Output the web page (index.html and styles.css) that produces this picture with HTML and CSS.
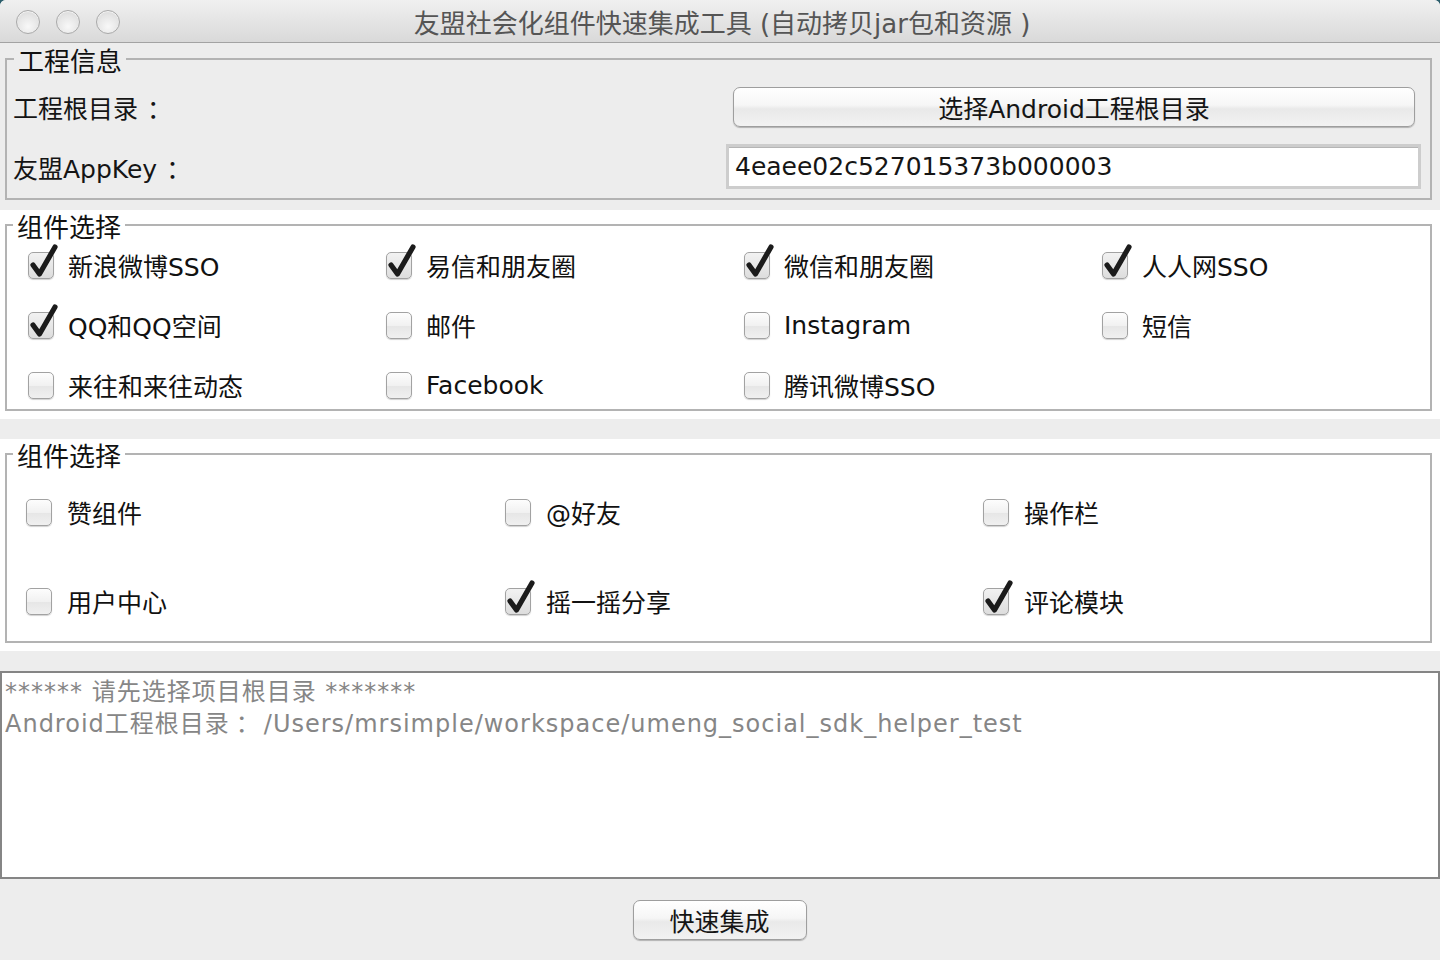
FILE: index.html
```html
<!DOCTYPE html>
<html lang="zh-CN">
<head>
<meta charset="utf-8">
<title>友盟社会化组件快速集成工具</title>
<link rel="stylesheet" href="styles.css">
</head>
<body>
<div class="window">
  <header class="titlebar">
    <div class="lights">
      <span class="light"></span><span class="light"></span><span class="light"></span>
    </div>
    <div class="title">友盟社会化组件快速集成工具 (自动拷贝jar包和资源 )</div>
  </header>

  <section class="sec sec-gray">
    <fieldset class="group info">
      <legend>工程信息</legend>
      <div class="info-grid">
        <div class="info-label">工程根目录<span class="punct">：</span></div>
        <div class="info-ctl"><button class="btn btn-wide">选择Android工程根目录</button></div>
        <div class="info-label">友盟AppKey<span class="punct">：</span></div>
        <div class="info-ctl"><input class="field" type="text" value="4eaee02c527015373b000003"></div>
      </div>
    </fieldset>
  </section>

  <section class="sec sec-white sec-platforms">
    <fieldset class="group platforms">
      <legend>组件选择</legend>
      <div class="grid4">
        <label class="cb"><span class="box on"><svg viewBox="0 0 30 36"><path d="M5 21 L11.5 30 L27 3"/></svg></span><span>新浪微博SSO</span></label>
        <label class="cb"><span class="box on"><svg viewBox="0 0 30 36"><path d="M5 21 L11.5 30 L27 3"/></svg></span><span>易信和朋友圈</span></label>
        <label class="cb"><span class="box on"><svg viewBox="0 0 30 36"><path d="M5 21 L11.5 30 L27 3"/></svg></span><span>微信和朋友圈</span></label>
        <label class="cb"><span class="box on"><svg viewBox="0 0 30 36"><path d="M5 21 L11.5 30 L27 3"/></svg></span><span>人人网SSO</span></label>
        <label class="cb"><span class="box on"><svg viewBox="0 0 30 36"><path d="M5 21 L11.5 30 L27 3"/></svg></span><span>QQ和QQ空间</span></label>
        <label class="cb"><span class="box"></span><span>邮件</span></label>
        <label class="cb"><span class="box"></span><span>Instagram</span></label>
        <label class="cb"><span class="box"></span><span>短信</span></label>
        <label class="cb"><span class="box"></span><span>来往和来往动态</span></label>
        <label class="cb"><span class="box"></span><span>Facebook</span></label>
        <label class="cb"><span class="box"></span><span>腾讯微博SSO</span></label>
      </div>
    </fieldset>
  </section>

  <section class="sec sec-white sec-features">
    <fieldset class="group features">
      <legend>组件选择</legend>
      <div class="grid3">
        <label class="cb"><span class="box"></span><span>赞组件</span></label>
        <label class="cb"><span class="box"></span><span>@好友</span></label>
        <label class="cb"><span class="box"></span><span>操作栏</span></label>
        <label class="cb"><span class="box"></span><span>用户中心</span></label>
        <label class="cb"><span class="box on"><svg viewBox="0 0 30 36"><path d="M5 21 L11.5 30 L27 3"/></svg></span><span>摇一摇分享</span></label>
        <label class="cb"><span class="box on"><svg viewBox="0 0 30 36"><path d="M5 21 L11.5 30 L27 3"/></svg></span><span>评论模块</span></label>
      </div>
    </fieldset>
  </section>

  <div class="log">
    <div class="log-line">****** 请先选择项目根目录 *******</div>
    <div class="log-line">Android工程根目录<span class="punct">：</span>/Users/mrsimple/workspace/umeng_social_sdk_helper_test</div>
  </div>

  <footer class="footer">
    <button class="btn btn-go">快速集成</button>
  </footer>
</div>
</body>
</html>
```

FILE: styles.css
```css
* { box-sizing: border-box; }

html, body {
  margin: 0;
  padding: 0;
  background: #2c5e6c;
}

body {
  font-family: "DejaVu Sans", "Noto Sans CJK SC", sans-serif;
  color: #151515;
}

.punct {
  display: inline-block;
  margin-left: 9px;
}

.window {
  width: 1440px;
  height: 960px;
  background: #ededed;
  border-radius: 6px 6px 0 0;
  overflow: hidden;
  display: flex;
  flex-direction: column;
}

/* title bar */
.titlebar {
  height: 43px;
  flex: none;
  display: flex;
  align-items: center;
  background: linear-gradient(#f0f0f0, #d9d9d9);
  border-bottom: 1px solid #a3a3a3;
}

.lights {
  display: flex;
  gap: 16px;
  padding-left: 16px;
  margin-top: 1px;
}

.light {
  width: 24px;
  height: 24px;
  border-radius: 50%;
  border: 1px solid #a9a9a9;
  background: radial-gradient(circle at 50% 70%, #f8f8f8 0%, #e4e4e4 60%, #d2d2d2 100%);
  box-shadow: inset 0 1px 1px rgba(255,255,255,0.8);
}

.title {
  flex: 1;
  text-align: center;
  font-size: 26px;
  color: #555;
  margin-left: -116px;
  margin-top: 1px;
}

/* sections */
.sec { flex: none; padding: 0 8px 0 5px; }
.sec-gray { background: #ededed; padding-bottom: 10px; }
.sec-white { background: #fff; }
.sec-platforms { padding-bottom: 8px; }
.sec-features { margin-top: 20px; padding-bottom: 8px; }

.group {
  margin: 0;
  border: 2px solid #b3b3b3;
  min-width: 0;
}

.group legend {
  font-size: 26px;
  line-height: 26px;
  padding: 6px 4px 0;
  color: #111;
}

/* info panel */
.info { padding: 7px 9px 3px 6px; }
.info legend { margin-left: 1px; }

.info-grid {
  display: grid;
  grid-template-columns: 713px 1fr;
  grid-template-rows: 50px 57px;
  row-gap: 6px;
  align-items: center;
}

.info-label { font-size: 25px; }

.info-ctl { display: flex; align-items: center; }

.btn {
  font-family: "DejaVu Sans", "Noto Sans CJK SC", sans-serif;
  font-size: 25px;
  color: #151515;
  height: 40px;
  border: 1px solid #9e9e9e;
  border-radius: 7px;
  background: linear-gradient(#ffffff 0%, #f6f6f6 45%, #e9e9e9 55%, #f2f2f2 100%);
  box-shadow: 0 1px 1px rgba(0,0,0,0.25);
  padding: 0;
}

.btn-wide {
  width: 682px;
  margin-left: 7px;
}

.field {
  width: 695px;
  height: 45px;
  font-family: "DejaVu Sans", "Noto Sans CJK SC", sans-serif;
  font-size: 25px;
  color: #151515;
  border: 3px solid #cdcdcd;
  box-shadow: inset 0 1px 0 #b5b5b5;
  background: #fff;
  padding: 0 0 0 6px;
  outline: none;
}

/* checkboxes */
.cb {
  display: flex;
  align-items: center;
  gap: 14px;
  font-size: 25px;
  color: #111;
}

.box {
  flex: none;
  width: 26px;
  height: 27px;
  border-radius: 5px;
  border: 1px solid #a2a2a2;
  background: linear-gradient(#fdfdfd 0%, #f1f1f1 50%, #e6e6e6 52%, #f0f0f0 100%);
  box-shadow: 0 1px 1px rgba(0,0,0,0.18);
  position: relative;
}

.box.on { background: linear-gradient(#f2f2f2, #dddddd); }

.box svg {
  position: absolute;
  left: -1px;
  top: -9px;
  width: 30px;
  height: 36px;
  overflow: visible;
}

.box svg path {
  fill: none;
  stroke: #1b1b1b;
  stroke-width: 5.2;
  stroke-linecap: round;
  stroke-linejoin: round;
}

.platforms { margin-top: -1px !important; padding: 0 0 0 21px; }
.platforms legend { margin-left: -15px; }

.grid4 {
  display: grid;
  grid-template-columns: 358px 358px 358px 1fr;
  grid-auto-rows: 48px;
  row-gap: 12px;
  align-items: center;
}

.features { margin-top: -1px !important; padding: 12px 0 10px 19px; }
.features legend { margin-left: -13px; }

.grid3 {
  display: grid;
  grid-template-columns: 479px 478px 1fr;
  grid-auto-rows: 60px;
  row-gap: 29px;
  align-items: center;
}

.features .cb { gap: 15px; }

/* log area */
.log {
  flex: none;
  margin-top: 20px;
  height: 208px;
  background: #fff;
  border: 2px solid #858585;
  padding: 3px 0 0 3px;
  color: #868686;
  font-size: 24px;
  letter-spacing: 1px;
}

.log .punct { margin-left: 6px; margin-right: 3px; }

.log-line {
  line-height: 32px;
  white-space: nowrap;
}

/* footer */
.footer {
  flex: 1;
  display: flex;
  justify-content: center;
  align-items: flex-start;
  padding-top: 21px;
  padding-right: 1px;
}

.btn-go {
  width: 174px;
}
```
